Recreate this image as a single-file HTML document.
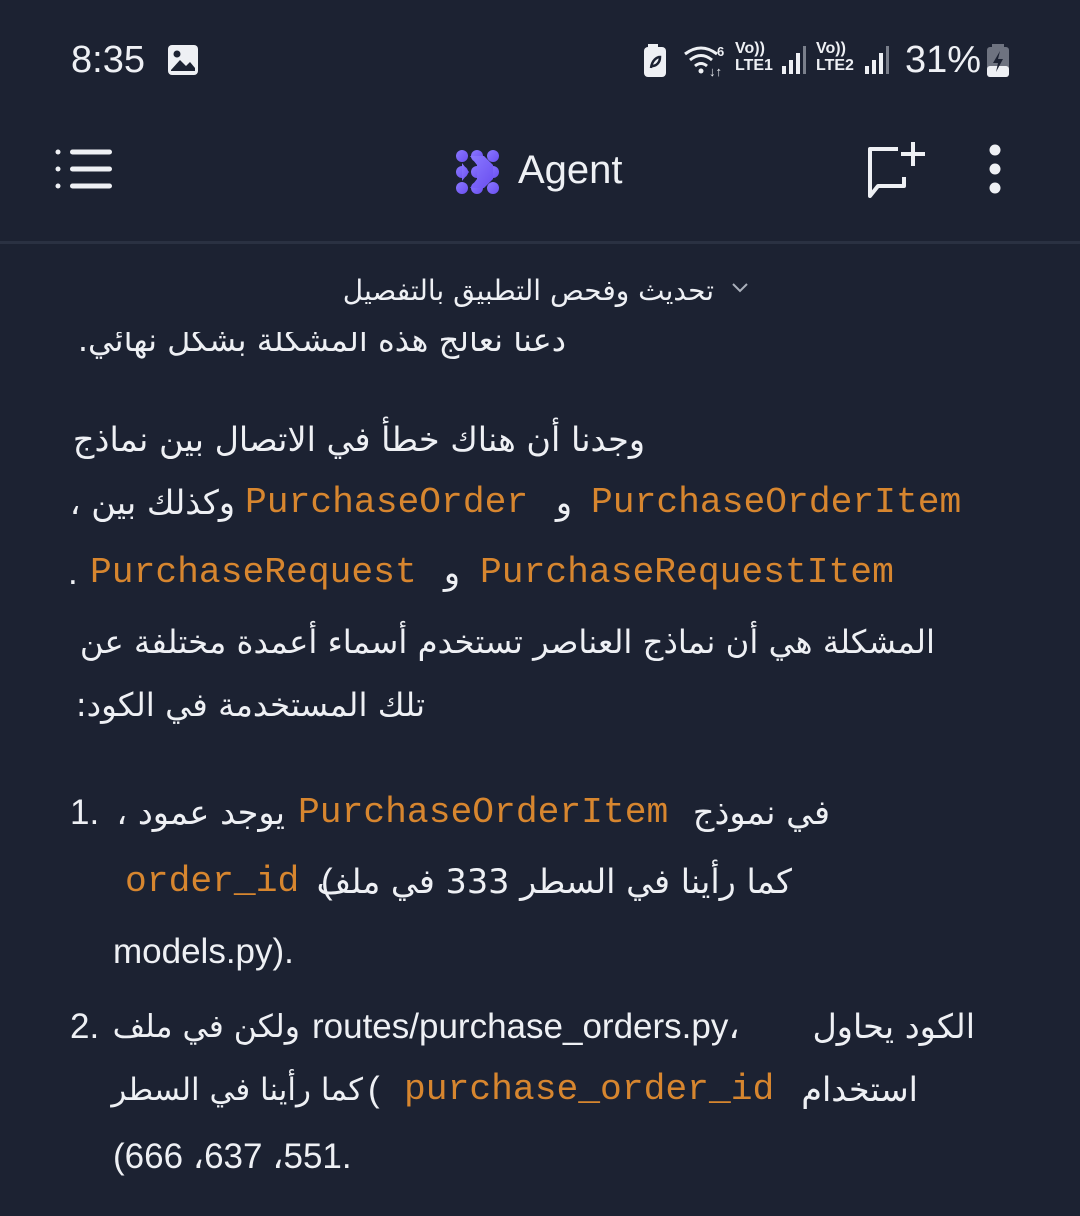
<!DOCTYPE html>
<html><head><meta charset="utf-8">
<style>
body{margin:0;width:1080px;height:1216px;background:#1c2232;overflow:hidden;position:relative;font-family:"Liberation Sans","DejaVu Sans",sans-serif;color:#eef0f4}
.a{position:absolute;white-space:nowrap;direction:rtl;text-align:right;font-family:"DejaVu Sans",sans-serif;font-size:33.5px;line-height:50px}
.l{position:absolute;white-space:nowrap;direction:ltr;unicode-bidi:bidi-override;font-size:35px;line-height:50px}
.c{position:absolute;white-space:nowrap;font-family:"Liberation Mono",monospace;font-size:36.3px;line-height:50px;color:#d7862f}
</style></head><body>
<!-- status bar -->
<div class="l" style="left:71px;top:35px;font-size:38px">8:35</div>
<svg style="position:absolute;left:167px;top:44px" width="32" height="32"><rect x="1" y="1" width="30" height="30" rx="4" fill="#eef0f4"/><circle cx="10" cy="10" r="3.5" fill="#1c2232"/><path d="M4 26 L13 16 L19 22 L23 18 L28 24 L28 27 L4 27Z" fill="#1c2232"/></svg>
<svg style="position:absolute;left:644px;top:44px" width="24" height="34"><rect x="4" y="0" width="10" height="4" fill="#eef0f4"/><rect x="0" y="3" width="22" height="30" rx="4" fill="#eef0f4"/><path d="M7 24 C8 16 13 13 16 13 C16 19 12 22 8 22" stroke="#1c2232" stroke-width="2.5" fill="none"/></svg>
<svg style="position:absolute;left:683px;top:44px" width="50" height="34"><path d="M2 10 Q18 -2 34 10 M7 16 Q18 7 29 16 M12 22 Q18 17 24 22" stroke="#eef0f4" stroke-width="3" fill="none"/><circle cx="18" cy="27" r="2.5" fill="#eef0f4"/><text x="34" y="12" font-size="13" fill="#eef0f4" font-family="Liberation Sans" font-weight="bold">6</text><text x="26" y="32" font-size="13" fill="#eef0f4" font-family="Liberation Sans" font-weight="bold">↓↑</text></svg>
<div class="l" style="left:735px;top:40px;font-size:16px;line-height:17px;font-weight:bold">Vo))<br>LTE1</div>
<svg style="position:absolute;left:780px;top:46px" width="28" height="30"><rect x="2" y="20" width="4" height="8" fill="#eef0f4"/><rect x="9" y="14" width="4" height="14" fill="#eef0f4"/><rect x="16" y="7" width="4" height="21" fill="#eef0f4"/><rect x="23" y="0" width="3" height="28" fill="#7a7f8b"/></svg>
<div class="l" style="left:816px;top:40px;font-size:16px;line-height:17px;font-weight:bold">Vo))<br>LTE2</div>
<svg style="position:absolute;left:863px;top:46px" width="28" height="30"><rect x="2" y="20" width="4" height="8" fill="#eef0f4"/><rect x="9" y="14" width="4" height="14" fill="#eef0f4"/><rect x="16" y="7" width="4" height="21" fill="#eef0f4"/><rect x="23" y="0" width="3" height="28" fill="#7a7f8b"/></svg>
<div class="l" style="left:905px;top:35px;font-size:38px">31%</div>
<svg style="position:absolute;left:987px;top:44px" width="24" height="34"><rect x="5" y="0" width="12" height="4" fill="#6e7380"/><rect x="0" y="3" width="22" height="30" rx="3" fill="#6e7380"/><rect x="0" y="22" width="22" height="11" rx="3" fill="#eef0f4"/><path d="M13 7 L6 19 L11 19 L9 28 L16 15 L11 15Z" fill="#1c2232"/></svg>
<!-- toolbar -->
<svg style="position:absolute;left:55px;top:148px" width="60" height="44"><g fill="#eef0f4"><circle cx="3" cy="4" r="2.5"/><circle cx="3" cy="21" r="2.5"/><circle cx="3" cy="38" r="2.5"/><rect x="15" y="1.5" width="42" height="5" rx="2.5"/><rect x="15" y="18.5" width="42" height="5" rx="2.5"/><rect x="15" y="35.5" width="42" height="5" rx="2.5"/></g></svg>
<svg style="position:absolute;left:455px;top:149px" width="48" height="46"><defs><linearGradient id="g" x1="0" y1="0" x2="1" y2="1"><stop offset="0" stop-color="#8a78ff"/><stop offset="1" stop-color="#6a4ff0"/></linearGradient></defs><g fill="url(#g)"><circle cx="7" cy="7" r="6"/><circle cx="22" cy="7" r="6"/><circle cx="38" cy="7" r="6"/><circle cx="7" cy="23" r="6"/><circle cx="22" cy="23" r="6"/><circle cx="38" cy="23" r="6"/><circle cx="7" cy="39" r="6"/><circle cx="22" cy="39" r="6"/><circle cx="38" cy="39" r="6"/><path d="M15 7 L29 7 L38 16 L38 30 L29 39 L15 39 L22 30 L22 16Z"/><path d="M7 14 L14 23 L7 32Z"/></g></svg>
<div class="l" style="left:518px;top:145px;font-size:40px">Agent</div>
<svg style="position:absolute;left:864px;top:140px" width="66" height="62"><path d="M34 9 H6 V56 L14 46 H40 V37" stroke="#eef0f4" stroke-width="4" fill="none" stroke-linejoin="round"/><path d="M49 2 V26 M37 14 H61" stroke="#eef0f4" stroke-width="4"/></svg>
<svg style="position:absolute;left:985px;top:143px" width="20" height="56"><circle cx="10" cy="7" r="5.5" fill="#eef0f4"/><circle cx="10" cy="26" r="5.5" fill="#eef0f4"/><circle cx="10" cy="45" r="5.5" fill="#eef0f4"/></svg>
<div style="position:absolute;left:0;top:241px;width:1080px;height:3px;background:#2a3142"></div>
<!-- clipped previous line -->
<div class="a" style="left:70px;width:496px;top:315px;font-size:32px">دعنا نعالج هذه المشكلة بشكل نهائي.</div>
<div style="position:absolute;left:0;top:244px;width:1080px;height:88px;background:#1c2232"></div>
<div class="a" style="left:312px;width:402px;top:266px;font-size:28px">تحديث وفحص التطبيق بالتفصيل</div>
<svg style="position:absolute;left:731px;top:282px" width="18" height="12"><path d="M2 2 L9 9 L16 2" stroke="#aab0bb" stroke-width="2" fill="none"/></svg>
<!-- body -->
<div class="a" style="left:70px;width:575px;top:415px">وجدنا أن هناك خطأ في الاتصال بين نماذج</div>
<div class="a" style="left:70px;width:165px;top:478px">وكذلك بين ،</div>
<div class="c" style="left:245px;top:478px">PurchaseOrder</div>
<div class="a" style="left:550px;width:22px;top:478px">و</div>
<div class="c" style="left:591px;top:478px">PurchaseOrderItem</div>
<div class="l" style="left:68px;top:548px">.</div>
<div class="c" style="left:90px;top:548px">PurchaseRequest</div>
<div class="a" style="left:438px;width:22px;top:548px">و</div>
<div class="c" style="left:480px;top:548px">PurchaseRequestItem</div>
<div class="a" style="left:70px;width:865px;top:617px;font-size:32.3px">المشكلة هي أن نماذج العناصر تستخدم أسماء أعمدة مختلفة عن</div>
<div class="a" style="left:70px;width:355px;top:680px;font-size:32.5px">تلك المستخدمة في الكود:</div>

<div class="l" style="left:70px;top:788px">1.</div>
<div class="a" style="left:113px;width:172px;top:788px">يوجد عمود ،</div>
<div class="c" style="left:298px;top:788px">PurchaseOrderItem</div>
<div class="a" style="left:693px;width:137px;top:788px">في نموذج</div>
<div class="c" style="left:125px;top:857px">order_id</div>
<div class="l" style="left:321px;top:857px">(</div>
<div class="a" style="left:340px;width:452px;top:857px">كما رأينا في السطر 333 في ملف</div>
<div class="l" style="left:113px;top:927px">models.py).</div>

<div class="l" style="left:70px;top:1002px">2.</div>
<div class="a" style="left:113px;width:187px;top:1002px;font-size:31.5px">ولكن في ملف</div>
<div class="l" style="left:312px;top:1002px">routes/purchase_orders.py،</div>
<div class="a" style="left:790px;width:185px;top:1002px">الكود يحاول</div>
<div class="a" style="left:113px;width:250px;top:1065px;font-size:31px">كما رأينا في السطر</div>
<div class="l" style="left:368px;top:1065px">(</div>
<div class="c" style="left:404px;top:1065px">purchase_order_id</div>
<div class="a" style="left:798px;width:120px;top:1065px">استخدام</div>
<div class="l" style="left:113px;top:1132px">(666 ،637 ،551.</div>
</body></html>
